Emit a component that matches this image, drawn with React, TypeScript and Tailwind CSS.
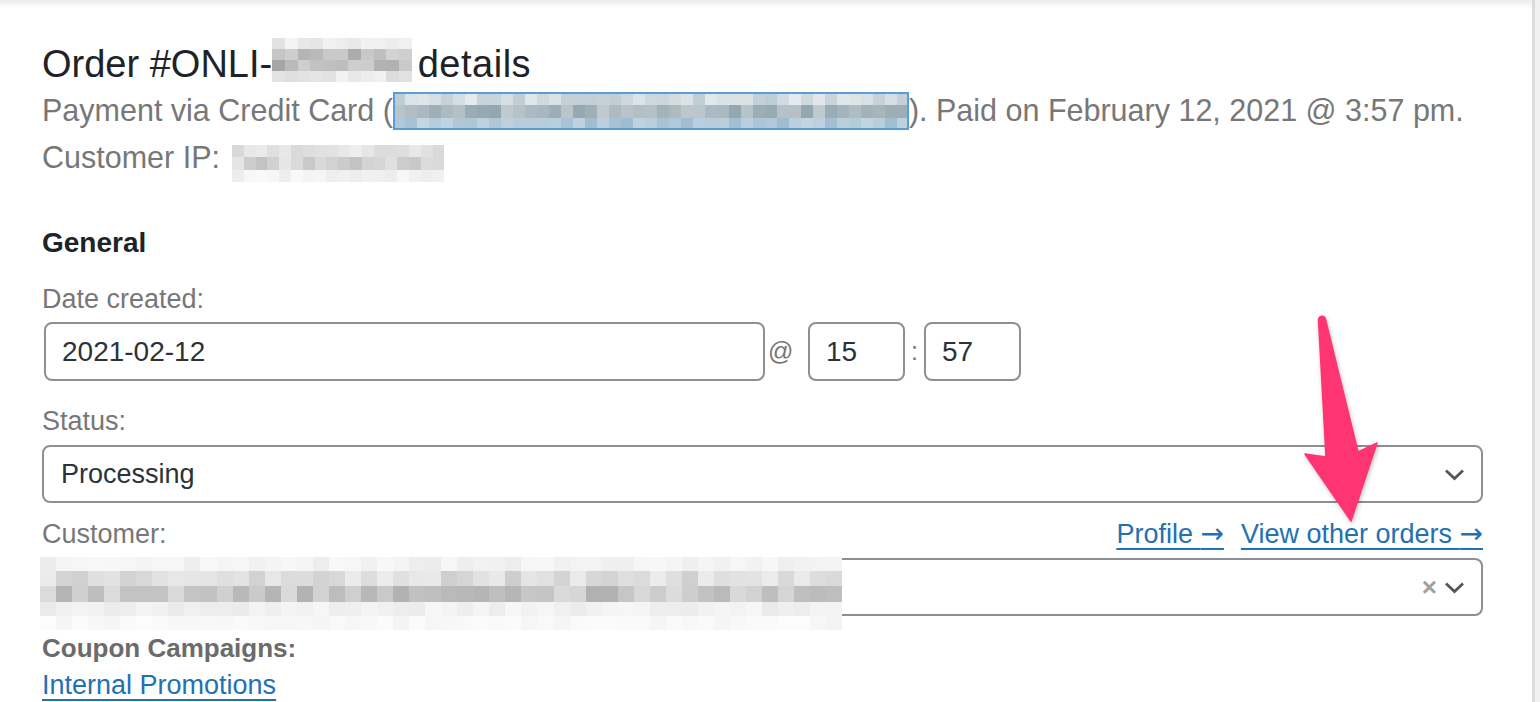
import type { ReactNode } from "react";

type Rgb = [number, number, number];
type MosaicRow = { h: number; from: Rgb; to: Rgb };

function seeded(seed: number) {
  let s = seed;
  return () => {
    s = (s * 16807) % 2147483647;
    return (s - 1) / 2147483646;
  };
}

// pixelated redaction block
function Mosaic({
  cols,
  cellW,
  rows,
  seed,
}: {
  cols: number;
  cellW: number;
  rows: MosaicRow[];
  seed: number;
}) {
  const next = seeded(seed);
  return (
    <div className="flex flex-col">
      {rows.map((row, i) => (
        <div key={i} className="flex">
          {Array.from({ length: cols }).map((_, j) => {
            const t = next();
            const c = row.from.map((v, k) => Math.round(v + (row.to[k] - v) * t));
            return (
              <div
                key={j}
                style={{ width: cellW, height: row.h, background: `rgb(${c.join(",")})` }}
              />
            );
          })}
        </div>
      ))}
    </div>
  );
}

function Chevron() {
  return (
    <svg width="21" height="13" viewBox="0 0 21 13" className="shrink-0">
      <path d="M2 2.5l8.5 8 8.5-8" fill="none" stroke="#50575e" strokeWidth="2.8" />
    </svg>
  );
}

function Label({ children, className = "" }: { children: ReactNode; className?: string }) {
  return <div className={"text-[27px] leading-[32px] text-[#777] " + className}>{children}</div>;
}

function Arrow() {
  return <span className="font-['DejaVu_Sans',sans-serif] text-[28px]">→</span>;
}

export default function App() {
  return (
    <div className="min-h-screen bg-[#f0f0f1] font-['Liberation_Sans',Arial,sans-serif]">
      <div className="relative min-h-[702px] w-[1535px] overflow-hidden border-r-[3px] border-[#dcdcde] bg-white pl-[42px]">
        <div className="absolute inset-x-0 top-0 h-[8px] bg-linear-to-b from-[#ececec] to-white" />

        {/* header */}
        <h2 className="relative mt-[41px] flex h-[46px] items-center text-[38px] leading-[46px] text-[#1d2327]">
          <span>Order #ONLI-</span>
          <div className="mb-[8px]">
            <Mosaic
              cols={11}
              cellW={12.7}
              seed={7}
              rows={[
                { h: 11, from: [226, 226, 226], to: [246, 246, 246] },
                { h: 11, from: [170, 170, 170], to: [214, 214, 214] },
                { h: 11, from: [160, 160, 160], to: [210, 210, 210] },
                { h: 11, from: [218, 218, 218], to: [244, 244, 244] },
              ]}
            />
          </div>
          <span className="ml-[6px] tracking-[0.5px]">details</span>
        </h2>

        <div className="text-[30.5px] text-[#777]">
          <div className="flex h-[47px] items-center whitespace-nowrap">
            <span>Payment via Credit Card (</span>
            <div className="relative">
              <Mosaic
                cols={43}
                cellW={12}
                seed={21}
                rows={[
                  { h: 13, from: [190, 204, 212], to: [228, 234, 237] },
                  { h: 13, from: [146, 166, 175], to: [192, 202, 206] },
                  { h: 12, from: [160, 188, 207], to: [196, 214, 226] },
                ]}
              />
              <div className="absolute inset-0 border-2 border-[#5b9dd9]" />
            </div>
            <span>). Paid on February 12, 2021 @ 3:57 pm.</span>
          </div>
          <div className="flex h-[47px] items-center whitespace-nowrap">
            <span>Customer IP:</span>
            <div className="ml-[12px] mt-[12px]">
              <Mosaic
                cols={18}
                cellW={11.8}
                seed={5}
                rows={[
                  { h: 12, from: [216, 216, 216], to: [240, 240, 240] },
                  { h: 13, from: [192, 192, 192], to: [232, 232, 232] },
                  { h: 12, from: [234, 234, 234], to: [250, 250, 250] },
                ]}
              />
            </div>
          </div>
        </div>

        {/* general */}
        <h3 className="mt-[45px] text-[28px] font-bold leading-[34px] text-[#1d2327]">General</h3>

        <Label className="mt-[23px]">Date created:</Label>
        <div className="mt-[7px] flex items-center text-[28px] text-[#2c3338]">
          <input
            readOnly
            value="2021-02-12"
            className="ml-[2px] h-[59px] w-[721px] rounded-[8px] border-2 border-[#8c8f94] bg-white px-[16px] outline-none"
          />
          <span className="w-[43px] pl-[3px] text-[25px] text-[#777]">@</span>
          <input
            readOnly
            value="15"
            className="h-[59px] w-[97px] rounded-[8px] border-2 border-[#8c8f94] bg-white px-[16px] outline-none"
          />
          <span className="w-[19px] text-center text-[25px] text-[#777]">:</span>
          <input
            readOnly
            value="57"
            className="h-[59px] w-[97px] rounded-[8px] border-2 border-[#8c8f94] bg-white px-[16px] outline-none"
          />
        </div>

        <Label className="mt-[24px]">Status:</Label>
        <div className="mt-[8px] flex h-[58px] w-[1441px] items-center justify-between rounded-[8px] border-2 border-[#8c8f94] pl-[17px] pr-[16px] text-[27px] text-[#2c3338]">
          <span>Processing</span>
          <Chevron />
        </div>

        <div className="mt-[15px] flex w-[1441px] items-center justify-between">
          <Label>Customer:</Label>
          <div className="flex gap-[17px] text-[27px] leading-[32px] text-[#2271b1]">
            <a href="#" className="underline decoration-2 underline-offset-[5px]">
              Profile <Arrow />
            </a>
            <a href="#" className="underline decoration-2 underline-offset-[5px]">
              View other orders <Arrow />
            </a>
          </div>
        </div>
        <div className="relative mt-[8px] flex h-[58px] w-[1441px] items-center justify-end gap-[7px] rounded-[8px] border-2 border-[#8c8f94] pr-[16px]">
          <span className="text-[26px] font-bold leading-none text-[#a0a0a0]">×</span>
          <Chevron />
          <div className="absolute -left-[4px] -top-[3px]">
            <Mosaic
              cols={50}
              cellW={16.06}
              seed={13}
              rows={[
                { h: 14, from: [236, 236, 238], to: [248, 248, 248] },
                { h: 15, from: [206, 206, 206], to: [236, 236, 236] },
                { h: 16, from: [176, 176, 176], to: [220, 220, 220] },
                { h: 14, from: [234, 234, 234], to: [248, 248, 248] },
                { h: 14, from: [244, 244, 244], to: [252, 252, 252] },
              ]}
            />
          </div>
        </div>

        <div className="mt-[16px] text-[26px] font-bold leading-[32px] text-[#6b6b6b]">Coupon Campaigns:</div>
        <a
          href="#"
          className="mt-[5px] block w-fit text-[27px] leading-[32px] text-[#2271b1] underline decoration-2 underline-offset-[5px]"
        >
          Internal Promotions
        </a>

        {/* annotation arrow */}
        <svg
          width="90"
          height="220"
          viewBox="0 0 90 220"
          className="absolute left-[1295px] top-[310px] drop-shadow-[1px_2px_2px_rgba(0,0,0,0.25)]"
        >
          <path
            d="M23.5 10 A3.5 3.5 0 0 1 30.5 9.5 L63 142 L82 133 L56 211 L10 144 L31 147 Z"
            fill="#ff3573"
            stroke="#ff3573"
            strokeWidth="1.5"
            strokeLinejoin="round"
          />
        </svg>
      </div>
    </div>
  );
}
